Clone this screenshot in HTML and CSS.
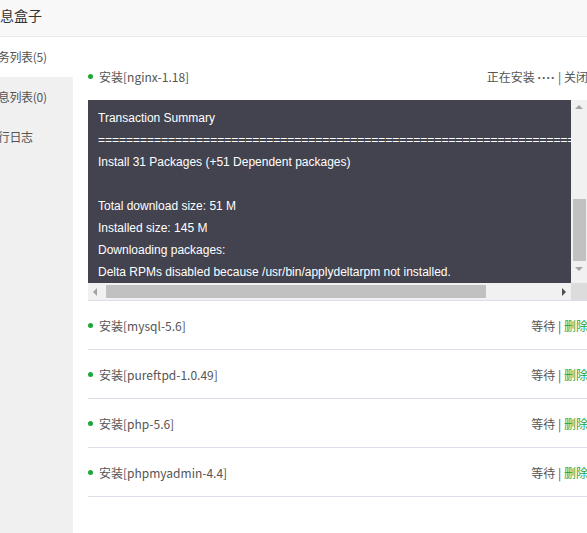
FILE: index.html
```html
<!DOCTYPE html>
<html lang="zh-CN">
<head>
<meta charset="utf-8">
<link rel="stylesheet" href="styles.css">
</head>
<body>
<div class="dialog">
  <div class="title">消息盒子</div>
  <div class="body">
    <ul class="side">
      <li class="side-item active">任务列表(5)</li>
      <li class="side-item">消息列表(0)</li>
      <li class="side-item">执行日志</li>
    </ul>
    <div class="main">
      <ul class="tasks">
        <li class="task">
          <div class="task-head">
            <span class="dot"></span>
            <span class="name">安装[nginx-1.18]</span>
            <span class="status">正在安装 <span class="dots">····</span> | 关闭</span>
          </div>
          <div class="log">
            <div class="log-text">Transaction Summary
================================================================================================
Install 31 Packages (+51 Dependent packages)

Total download size: 51 M
Installed size: 145 M
Downloading packages:
Delta RPMs disabled because /usr/bin/applydeltarpm not installed.</div>
            <div class="vbar">
              <span class="arrow up"></span>
              <span class="vthumb"></span>
              <span class="arrow down"></span>
            </div>
            <div class="hbar">
              <span class="arrow left"></span>
              <span class="hthumb"></span>
              <span class="arrow right"></span>
            </div>
            <div class="corner"></div>
          </div>
        </li>
        <li class="task">
          <div class="task-head"><span class="dot"></span><span class="name">安装[mysql-5.6]</span><span class="status">等待 | <span class="del">删除</span></span></div>
        </li>
        <li class="task">
          <div class="task-head"><span class="dot"></span><span class="name">安装[pureftpd-1.0.49]</span><span class="status">等待 | <span class="del">删除</span></span></div>
        </li>
        <li class="task">
          <div class="task-head"><span class="dot"></span><span class="name">安装[php-5.6]</span><span class="status">等待 | <span class="del">删除</span></span></div>
        </li>
        <li class="task">
          <div class="task-head"><span class="dot"></span><span class="name">安装[phpmyadmin-4.4]</span><span class="status">等待 | <span class="del">删除</span></span></div>
        </li>
      </ul>
    </div>
  </div>
</div>
</body>
</html>
```
FILE: styles.css
```css
html, body {
  margin: 0;
  padding: 0;
  background: #fff;
  overflow: hidden;
  height: 533px;
}
body {
  font-family: "Noto Sans CJK SC", "Microsoft YaHei", sans-serif;
  font-size: 12px;
  color: #555;
}
ul { list-style: none; margin: 0; padding: 0; }

.dialog {
  margin-left: -14px;
  margin-right: -1px;
  height: 533px;
  display: flex;
  flex-direction: column;
}
.title {
  height: 36px;
  line-height: 30px;
  background: #f8f8f8;
  border-bottom: 1px solid #eaeaea;
  font-size: 14px;
  color: #333;
  flex: none;
}
.body {
  flex: 1;
  display: flex;
  min-height: 0;
}
.side {
  width: 87px;
  flex: none;
  background: #f0f0f0;
}
.side-item {
  height: 40px;
  line-height: 40px;
  font-size: 12px;
  color: #555;
  white-space: nowrap;
  letter-spacing: -0.3px;
}
.side-item.active { background: #fff; }

.main {
  flex: 1;
  padding: 15px 0 0 15px;
  min-width: 0;
}
.task {
  border-bottom: 1px solid #dedde9;
}
.task-head {
  height: 48px;
  display: flex;
  align-items: center;
  white-space: nowrap;
}
.dot {
  width: 5px;
  height: 5px;
  border-radius: 50%;
  background: #20a53a;
  margin-right: 6px;
  flex: none;
}
.name { flex: 1; color: #555; }
.status { color: #555; }
.dots {
  font-family: "Liberation Sans", Arial, sans-serif;
  font-weight: bold;
  letter-spacing: 0.5px;
}
.del { color: #20a53a; }

.log {
  display: grid;
  grid-template-columns: 1fr 17px;
  grid-template-rows: 183px 17px;
  background: #43434f;
}
.log-text {
  overflow: hidden;
  white-space: pre;
  font-family: "Liberation Sans", Arial, sans-serif;
  font-size: 12px;
  line-height: 22px;
  color: #fff;
  padding: 7px 10px 0;
}
.vbar {
  background: #f1f1f1;
  display: flex;
  flex-direction: column;
  align-items: center;
}
.vthumb {
  width: 13px;
  height: 62px;
  background: #c1c1c1;
  margin-top: 90px;
  margin-left: -1px;
}
.hbar {
  background: #f1f1f1;
  display: flex;
  align-items: center;
}
.hthumb {
  height: 13px;
  width: 380px;
  background: #c1c1c1;
  margin-left: 9px;
}
.corner { background: #dcdcdc; }

.arrow { width: 0; height: 0; display: block; flex: none; }
.arrow.up {
  margin-top: 5px;
  margin-left: -1px;
  border-left: 4px solid transparent;
  border-right: 4px solid transparent;
  border-bottom: 4px solid #a3a3a3;
}
.arrow.down {
  margin-top: 6px;
  margin-left: -1px;
  border-left: 4px solid transparent;
  border-right: 4px solid transparent;
  border-top: 4px solid #a3a3a3;
}
.arrow.left {
  margin-left: 5px;
  border-top: 4px solid transparent;
  border-bottom: 4px solid transparent;
  border-right: 4px solid #a3a3a3;
}
.arrow.right {
  margin-left: auto;
  margin-right: 5px;
  border-top: 4px solid transparent;
  border-bottom: 4px solid transparent;
  border-left: 4px solid #505050;
}
```
